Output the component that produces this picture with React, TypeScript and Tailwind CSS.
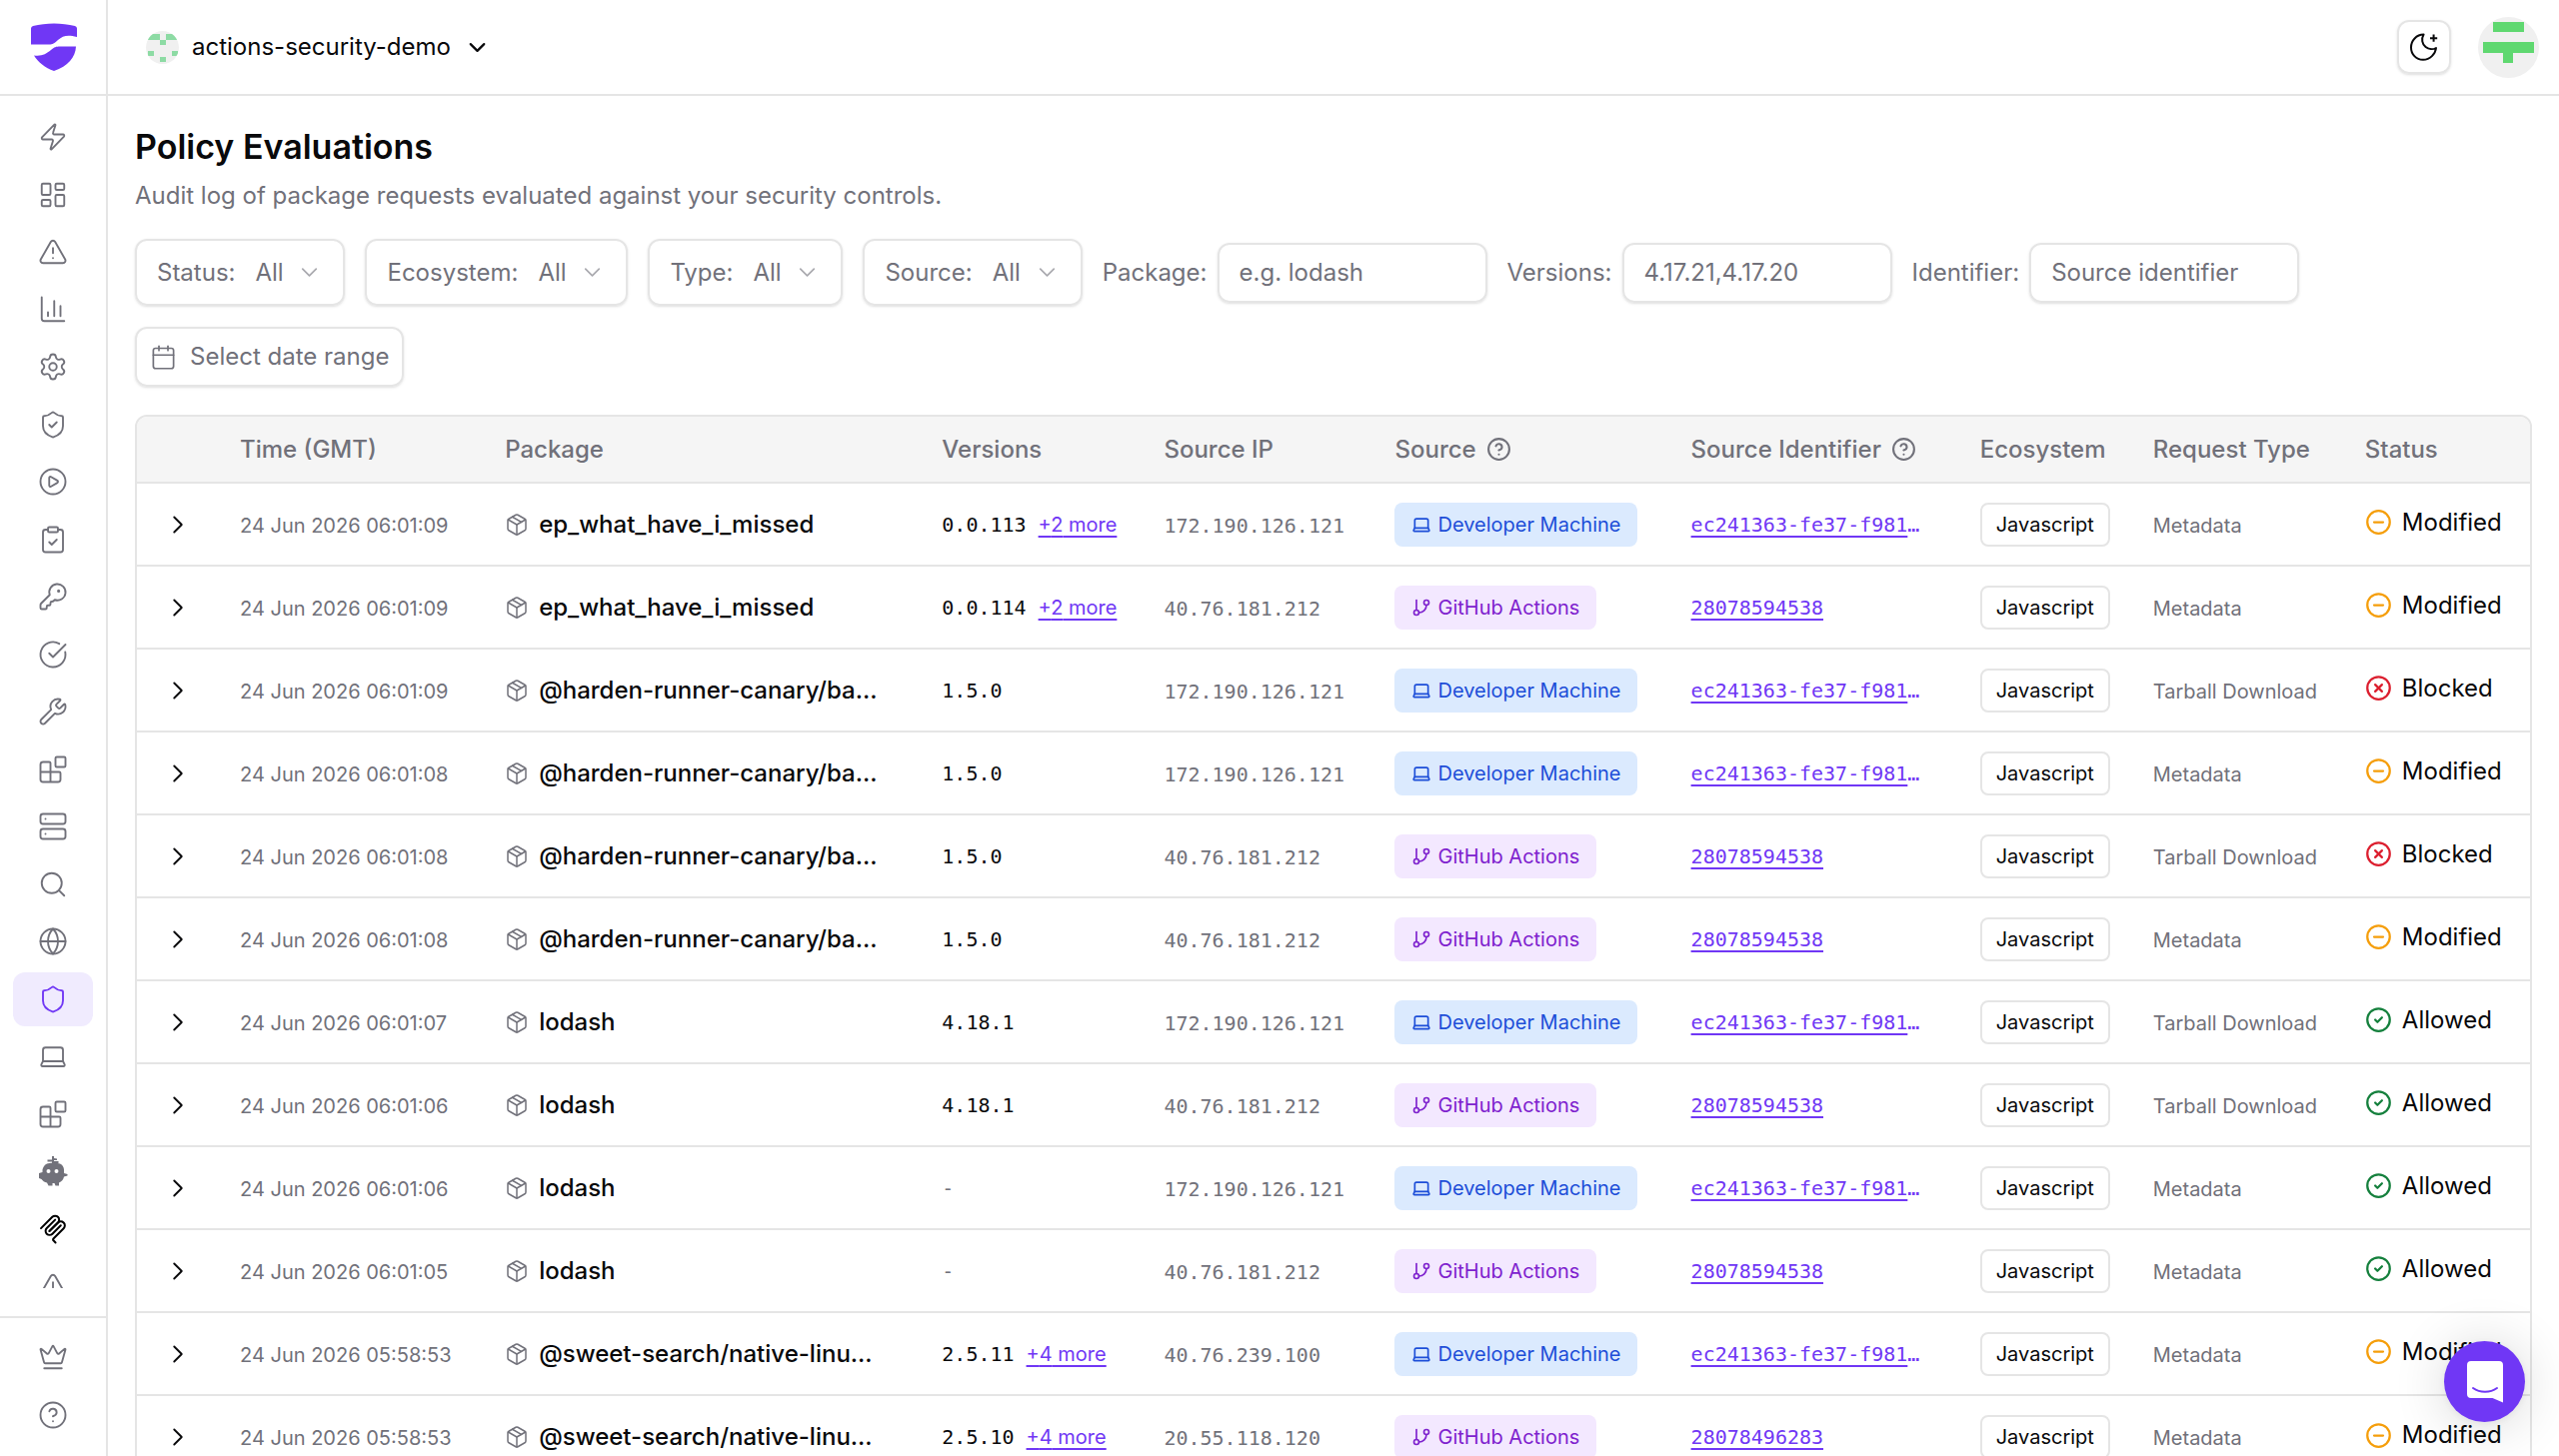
import type { ReactNode } from 'react';
import {
  Blocks,
  Calendar,
  ChevronDown,
  ChevronRight,
  CircleCheck,
  CircleCheckBig,
  CircleMinus,
  CirclePlay,
  CircleQuestionMark,
  CircleX,
  ClipboardCheck,
  Crown,
  GitBranch,
  Globe,
  KeyRound,
  Laptop,
  LayoutDashboard,
  Package,
  Search,
  Server,
  Settings,
  Shield,
  ShieldCheck,
  TriangleAlert,
  Wrench,
  Zap,
} from 'lucide-react';
import type { LucideIcon } from 'lucide-react';
import clsx from 'clsx';

type SourceKind = 'Developer Machine' | 'GitHub Actions';
type Status = 'Modified' | 'Blocked' | 'Allowed';

interface Evaluation {
  time: string;
  pkg: string;
  version: string;
  more?: number;
  ip: string;
  source: SourceKind;
  identifier: string;
  requestType: 'Metadata' | 'Tarball Download';
  status: Status;
}

const DEV = 'Developer Machine';
const GHA = 'GitHub Actions';
const MACHINE_ID = 'ec241363-fe37-f981';

const evaluations: Evaluation[] = [
  { time: '06:01:09', pkg: 'ep_what_have_i_missed', version: '0.0.113', more: 2, ip: '172.190.126.121', source: DEV, identifier: MACHINE_ID, requestType: 'Metadata', status: 'Modified' },
  { time: '06:01:09', pkg: 'ep_what_have_i_missed', version: '0.0.114', more: 2, ip: '40.76.181.212', source: GHA, identifier: '28078594538', requestType: 'Metadata', status: 'Modified' },
  { time: '06:01:09', pkg: '@harden-runner-canary/ba...', version: '1.5.0', ip: '172.190.126.121', source: DEV, identifier: MACHINE_ID, requestType: 'Tarball Download', status: 'Blocked' },
  { time: '06:01:08', pkg: '@harden-runner-canary/ba...', version: '1.5.0', ip: '172.190.126.121', source: DEV, identifier: MACHINE_ID, requestType: 'Metadata', status: 'Modified' },
  { time: '06:01:08', pkg: '@harden-runner-canary/ba...', version: '1.5.0', ip: '40.76.181.212', source: GHA, identifier: '28078594538', requestType: 'Tarball Download', status: 'Blocked' },
  { time: '06:01:08', pkg: '@harden-runner-canary/ba...', version: '1.5.0', ip: '40.76.181.212', source: GHA, identifier: '28078594538', requestType: 'Metadata', status: 'Modified' },
  { time: '06:01:07', pkg: 'lodash', version: '4.18.1', ip: '172.190.126.121', source: DEV, identifier: MACHINE_ID, requestType: 'Tarball Download', status: 'Allowed' },
  { time: '06:01:06', pkg: 'lodash', version: '4.18.1', ip: '40.76.181.212', source: GHA, identifier: '28078594538', requestType: 'Tarball Download', status: 'Allowed' },
  { time: '06:01:06', pkg: 'lodash', version: '-', ip: '172.190.126.121', source: DEV, identifier: MACHINE_ID, requestType: 'Metadata', status: 'Allowed' },
  { time: '06:01:05', pkg: 'lodash', version: '-', ip: '40.76.181.212', source: GHA, identifier: '28078594538', requestType: 'Metadata', status: 'Allowed' },
  { time: '05:58:53', pkg: '@sweet-search/native-linu...', version: '2.5.11', more: 4, ip: '40.76.239.100', source: DEV, identifier: MACHINE_ID, requestType: 'Metadata', status: 'Modified' },
  { time: '05:58:53', pkg: '@sweet-search/native-linu...', version: '2.5.10', more: 4, ip: '20.55.118.120', source: GHA, identifier: '28078496283', requestType: 'Metadata', status: 'Modified' },
];

const Logo = () => (
  <svg viewBox="0 0 46 48" className="h-12 w-[46px]" fill="#7037f5">
    <path d="M0 5.500Q0 3.600 2 3C15 -0.500 31 -0.500 44 3Q46 3.600 46 5.500V14C36 11.500 32 13 27 17C23 20.500 22 21.500 18 21.500H0Z" />
    <path d="M3 32.500C11 33.500 15 31 20 27C23.500 24 25 23.500 29 23.500H45C44.500 34 37 43.500 23 48C14 45 7 39 3 32.500Z" />
  </svg>
);

const ChartIcon = () => (
  <svg viewBox="0 0 24 24" className="size-[30px]" fill="none" stroke="currentColor" strokeWidth="1.5" strokeLinecap="round" strokeLinejoin="round">
    <path d="M3 2v17a2 2 0 0 0 2 2h16M8 17v-3M13 17V5M18 17V9" />
  </svg>
);

const RobotIcon = () => (
  <svg viewBox="0 0 30 30" className="size-[30px]" fill="currentColor">
    <path d="M14 0h2v2l3 .5v1.500h-3v1h4.500v2H16v2h-2V5.500h-4.500V3.500H14Z" />
    <path
      fillRule="evenodd"
      d="M9 7.500C11 6.500 20 6.500 22 7.500C24.500 8.700 26 11 26 13.500V17L29.500 18v1.500L26 20.500C25.500 23.500 23.500 25.500 21 26.500V29.500H17.500L16.500 27H14.500V29.500H10.500L9 26.500C6.500 26 4.500 24.500 3.500 23L1 22V17L4.500 16V13.500C5 11 6.500 8.700 9 7.500ZM10.500 13a2 2 0 1 0 0 4 2 2 0 0 0 0-4ZM18.500 13a2 2 0 1 0 0 4 2 2 0 0 0 0-4Z"
    />
  </svg>
);

const McpIcon = () => (
  <svg viewBox="0 0 180 180" className="size-[30px] text-black" fill="none" stroke="currentColor" strokeWidth="12" strokeLinecap="round">
    <path d="M18 84.853L85.882 16.971C95.255 7.598 110.451 7.598 119.823 16.971C129.196 26.343 129.196 41.539 119.823 50.912L68.558 102.177" />
    <path d="M69.265 101.470L119.823 50.912C129.196 41.539 144.392 41.539 153.765 50.912L154.118 51.265C163.491 60.638 163.491 75.834 154.118 85.206L92.725 146.600C89.601 149.724 89.601 154.789 92.725 157.913L105.331 170.520" />
    <path d="M102.853 33.941L52.648 84.146C43.275 93.518 43.275 108.714 52.648 118.087C62.020 127.459 77.216 127.459 86.589 118.087L136.794 67.882" />
  </svg>
);

const MoonIcon = () => (
  <svg viewBox="0 0 15 15" className="size-[30px]" fill="none" stroke="currentColor">
    <path d="M7.300 1.300C6 3.500 6.500 6 8.300 7.500C9.800 8.700 12 8.900 13.500 8C13.200 11 10.500 13.900 7 13.900C3.500 13.900 1 11 1 7.700C1 4.300 3.700 1.300 7.300 1.300Z" strokeLinejoin="round" />
    <path d="M12.300 1.300v3.600M10.500 3.100h3.600" />
  </svg>
);

const OrgAvatar = () => (
  <svg viewBox="0 0 33 33" className="size-[33px] rounded-full bg-[#f0f0f0]" fill="#8ddba4">
    <path d="M2 3h12v6H2zM20 3h12v6H20zM14 9h6v5h-6zM2 20h6v5H2zM26 20h6v5h-6zM14 26h6v5h-6z" />
  </svg>
);

const UserAvatar = () => (
  <svg viewBox="0 0 61 61" className="size-[61px]" fill="#5fd870">
    <path d="M15 5h31v10H15zM5 25h51v11H35v10H25V36H5z" />
  </svg>
);

type NavIcon = LucideIcon | (() => ReactNode);

const navItems: { label: string; icon: NavIcon }[] = [
  { label: 'Get started', icon: Zap },
  { label: 'Dashboard', icon: LayoutDashboard },
  { label: 'Alerts', icon: TriangleAlert },
  { label: 'Reports', icon: ChartIcon },
  { label: 'Settings', icon: Settings },
  { label: 'Protection', icon: ShieldCheck },
  { label: 'Runs', icon: CirclePlay },
  { label: 'Policies', icon: ClipboardCheck },
  { label: 'Secrets', icon: KeyRound },
  { label: 'Checks', icon: CircleCheckBig },
  { label: 'Tools', icon: Wrench },
  { label: 'Actions', icon: Blocks },
  { label: 'Runners', icon: Server },
  { label: 'Search', icon: Search },
  { label: 'Network', icon: Globe },
  { label: 'Policy evaluations', icon: Shield },
  { label: 'Developer machines', icon: Laptop },
  { label: 'Extensions', icon: Blocks },
  { label: 'Agents', icon: RobotIcon },
  { label: 'MCP servers', icon: McpIcon },
  { label: 'Incidents', icon: TriangleAlert },
];

const NavItem = ({ label, icon: Icon, active }: { label: string; icon: NavIcon; active?: boolean }) => (
  <a
    href="#"
    aria-label={label}
    className={clsx(
      'flex h-[54px] w-20 shrink-0 items-center justify-center rounded-xl',
      active ? 'bg-[#f0ebfe] text-[#7037f5]' : 'text-[#71717a]',
    )}
  >
    <Icon size={30} strokeWidth={1.5} />
  </a>
);

const Sidebar = () => (
  <aside className="flex w-[108px] shrink-0 flex-col border-r-2 border-[#e5e5e5]">
    <a href="#" aria-label="Home" className="flex h-24 shrink-0 items-center justify-center border-b-2 border-[#e5e5e5] pl-[2px]">
      <Logo />
    </a>
    <nav className="mt-[14px] mb-7 min-h-0 flex-1 overflow-hidden">
      <div className="flex h-[1204px] flex-col items-center justify-between">
        {navItems.map((item) => (
          <NavItem key={item.label} {...item} active={item.icon === Shield} />
        ))}
      </div>
    </nav>
    <div className="flex flex-col items-center gap-1 border-t-2 border-[#e5e5e5] pt-3 pb-[14px]">
      <NavItem label="Upgrade" icon={Crown} />
      <NavItem label="Help" icon={CircleQuestionMark} />
    </div>
  </aside>
);

const Header = () => (
  <header className="flex h-24 shrink-0 items-center justify-between border-b-2 border-[#e5e5e5] pr-5 pl-[38px]">
    <button className="flex items-center gap-[13px] text-[24px]">
      <OrgAvatar />
      actions-security-demo
      <ChevronDown size={27} strokeWidth={2} />
    </button>
    <div className="flex items-center gap-[27px]">
      <button aria-label="Toggle theme" className="flex size-[54px] items-center justify-center rounded-xl border-2 border-[#e5e5e5] shadow-sm">
        <MoonIcon />
      </button>
      <button aria-label="Account" className="size-[61px] overflow-hidden rounded-full bg-[#f0f0f0]">
        <UserAvatar />
      </button>
    </div>
  </header>
);

const FilterSelect = ({ label }: { label: string }) => (
  <label className="flex h-[67px] items-center gap-5 rounded-xl border-2 border-[#e5e5e5] px-5 shadow-sm">
    {label}
    <span className="grid w-[68px] items-center">
      <select className="col-start-1 row-start-1 w-full appearance-none bg-transparent outline-none">
        <option>All</option>
      </select>
      <ChevronDown size={27} strokeWidth={1.5} className="pointer-events-none col-start-1 row-start-1 justify-self-end opacity-60" />
    </span>
  </label>
);

const FilterInput = ({ label, placeholder }: { label: string; placeholder: string }) => (
  <label className="flex items-center gap-[10px]">
    {label}
    <input
      type="text"
      placeholder={placeholder}
      className="h-[60px] w-[270px] rounded-xl border-2 border-[#e5e5e5] px-5 shadow-sm outline-none placeholder:text-[#71717a]"
    />
  </label>
);

const SourceBadge = ({ source }: { source: SourceKind }) => {
  const dev = source === DEV;
  const Icon = dev ? Laptop : GitBranch;
  return (
    <span
      className={clsx(
        'inline-flex h-11 items-center gap-[6px] rounded-lg px-[17px] align-middle text-[20px]',
        dev ? 'bg-[#dbeafe] text-[#1d4ed8]' : 'bg-[#f3e8ff] text-[#7e22ce]',
      )}
    >
      <Icon size={20} strokeWidth={2} />
      {source}
    </span>
  );
};

const statusIcons = {
  Modified: { icon: CircleMinus, color: 'text-[#f59e0b]' },
  Blocked: { icon: CircleX, color: 'text-[#dc1f2f]' },
  Allowed: { icon: CircleCheck, color: 'text-[#15803d]' },
};

const StatusLabel = ({ status }: { status: Status }) => {
  const { icon: Icon, color } = statusIcons[status];
  return (
    <span className="flex items-center gap-[10px] pb-1 text-[24px]">
      <Icon size={27} strokeWidth={2} className={color} />
      {status}
    </span>
  );
};

const HeadCell = ({ children, help }: { children?: ReactNode; help?: boolean }) => (
  <th scope="col" className="px-5 text-left font-medium">
    <span className="flex items-center gap-[10px]">
      {children}
      {help && <CircleQuestionMark size={25} strokeWidth={2} />}
    </span>
  </th>
);

const linkClass = 'text-[#7037f5] underline decoration-2 underline-offset-4';

const EvaluationRow = ({ row }: { row: Evaluation }) => (
  <tr className="h-[83px] border-t-2 border-[#e5e5e5] whitespace-nowrap">
    <td className="pl-[26px]">
      <button aria-label="Expand row" className="flex">
        <ChevronRight size={30} strokeWidth={1.5} />
      </button>
    </td>
    <td className="px-5 pt-[2px] text-[20px] text-[#71717a]">24 Jun 2026 {row.time}</td>
    <td className="px-5">
      <span className="flex items-center gap-[10px] text-[24px] font-medium">
        <Package size={24} strokeWidth={1.5} className="text-[#71717a]" />
        {row.pkg}
      </span>
    </td>
    <td className="px-5 text-[20px]">
      <span className={clsx('font-[DejaVu_Sans_Mono,monospace]', row.version === '-' && 'text-[#71717a]')}>{row.version}</span>
      {row.more && (
        <a href="#" className={clsx(linkClass, 'ml-3')}>
          +{row.more} more
        </a>
      )}
    </td>
    <td className="px-5 pt-[2px] font-[DejaVu_Sans_Mono,monospace] text-[20px] text-[#71717a]">{row.ip}</td>
    <td className="px-5">
      <SourceBadge source={row.source} />
    </td>
    <td className="px-5 font-[DejaVu_Sans_Mono,monospace] text-[20px]">
      <a href="#" className={linkClass}>{row.identifier}</a>
      {row.identifier === MACHINE_ID && <span className="text-[#7037f5]">…</span>}
    </td>
    <td className="px-5">
      <span className="inline-flex h-11 items-center rounded-lg border-2 border-[#e5e5e5] px-[14px] align-middle text-[20px]">Javascript</span>
    </td>
    <td className="px-5 pt-[2px] text-[20px] text-[#71717a]">{row.requestType}</td>
    <td className="px-5">
      <StatusLabel status={row.status} />
    </td>
  </tr>
);

const EvaluationTable = () => (
  <div className="mt-7 overflow-hidden rounded-xl border-2 border-[#e5e5e5]">
    <table className="w-full table-fixed">
      <colgroup>
        <col className="w-[83px]" />
        <col className="w-[265px]" />
        <col className="w-[437px]" />
        <col className="w-[222px]" />
        <col className="w-[231px]" />
        <col className="w-[296px]" />
        <col className="w-[289px]" />
        <col className="w-[173px]" />
        <col className="w-[212px]" />
        <col className="w-[185px]" />
      </colgroup>
      <thead>
        <tr className="h-[66px] bg-[#f5f5f5] text-[24px] whitespace-nowrap text-[#71717a]">
          <HeadCell />
          <HeadCell>Time (GMT)</HeadCell>
          <HeadCell>Package</HeadCell>
          <HeadCell>Versions</HeadCell>
          <HeadCell>Source IP</HeadCell>
          <HeadCell help>Source</HeadCell>
          <HeadCell help>Source Identifier</HeadCell>
          <HeadCell>Ecosystem</HeadCell>
          <HeadCell>Request Type</HeadCell>
          <HeadCell>Status</HeadCell>
        </tr>
      </thead>
      <tbody>
        {evaluations.map((row, i) => (
          <EvaluationRow key={i} row={row} />
        ))}
      </tbody>
    </table>
  </div>
);

const ChatButton = () => (
  <button
    aria-label="Open chat"
    className="fixed right-[34px] bottom-[34px] flex size-[81px] items-center justify-center rounded-full bg-[#7037f5] shadow-[0_2px_10px_rgba(0,0,0,0.06),0_3px_54px_rgba(0,0,0,0.16)]"
  >
    <svg viewBox="0 0 36 42" className="h-[42px] w-9">
      <path fill="#fff" d="M4 0h28a4 4 0 0 1 4 4v37.500L25.500 37H4a4 4 0 0 1-4-4V4a4 4 0 0 1 4-4Z" />
      <path fill="none" stroke="#7037f5" strokeWidth="2" strokeLinecap="round" d="M6 27c7 5 17 5 24 0" />
    </svg>
  </button>
);

const App = () => {
  return (
    <div className="flex h-screen overflow-hidden bg-white font-[Inter,sans-serif] text-[#09090b]">
      <Sidebar />
      <div className="flex min-w-0 flex-1 flex-col">
        <Header />
        <main className="min-h-0 flex-1 overflow-hidden px-[27px] pt-7">
          <h1 className="text-[34px] leading-[46px] font-semibold">Policy Evaluations</h1>
          <p className="mt-2 text-[24px] leading-9 text-[#71717a]">
            Audit log of package requests evaluated against your security controls.
          </p>
          <div className="mt-[25px] flex flex-wrap items-center gap-x-5 gap-y-[21px] text-[24px] text-[#71717a]">
            <FilterSelect label="Status:" />
            <FilterSelect label="Ecosystem:" />
            <FilterSelect label="Type:" />
            <FilterSelect label="Source:" />
            <FilterInput label="Package:" placeholder="e.g. lodash" />
            <FilterInput label="Versions:" placeholder="4.17.21,4.17.20" />
            <FilterInput label="Identifier:" placeholder="Source identifier" />
            <button className="flex h-[60px] items-center gap-[13px] rounded-xl border-2 border-[#e5e5e5] px-[13px] shadow-sm">
              <Calendar size={27} strokeWidth={1.5} />
              Select date range
            </button>
          </div>
          <EvaluationTable />
        </main>
      </div>
      <ChatButton />
    </div>
  );
};

export default App;
